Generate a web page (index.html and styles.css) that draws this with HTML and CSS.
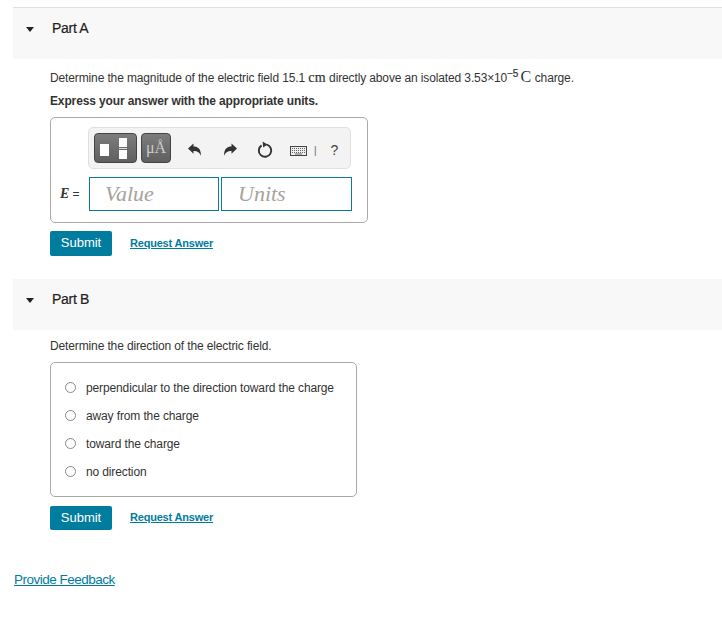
FILE: index.html
```html
<!DOCTYPE html>
<html lang="en">
<head>
  <meta charset="UTF-8">
  <title>Part A and Part B</title>
  <meta name="viewport" content="width=device-width, initial-scale=1.0">
  <link rel="stylesheet" href="styles.css">
</head>
<body>
  <div class="container">
    <section class="part part-a">
      <div class="part-header">
        <span class="caret"></span>
        <h2>Part A</h2>
      </div>
      <div class="part-body">
        <p class="question">Determine the magnitude of the electric field 15.1 <span class="math">cm</span> directly above an isolated 3.53×10<sup>−5</sup> <span class="math math-big">C</span> charge.</p>
        <p class="instruction">Express your answer with the appropriate units.</p>

        <div class="answer-box">
          <div class="toolbar">
            <div class="tool-btn tool-templates">
              <span class="tpl-square"></span>
              <span class="tpl-frac"><i></i><b></b><i></i></span>
            </div>
            <div class="tool-btn tool-units">μÅ</div>
            <svg class="icon icon-undo" width="16" height="16" viewBox="0 0 16 16"><path d="M1 6.5 6.5 1.5V4.6C11 4.6 14 7 14 14 12.7 10.4 10.6 8.9 6.5 8.9V11.8Z" fill="#333"/></svg>
            <svg class="icon icon-redo" width="16" height="16" viewBox="0 0 16 16"><path d="M15 6.5 9.5 1.5V4.6C5 4.6 2 7 2 14 3.3 10.4 5.4 8.9 9.5 8.9V11.8Z" fill="#333"/></svg>
            <svg class="icon icon-reset" width="18" height="18" viewBox="0 0 18 18"><path d="M10.7 3.6A6.2 6.2 0 1 1 5.6 4.4" fill="none" stroke="#333" stroke-width="1.9"/><path d="M6.6 0.6 11.4 3.6 7.2 6.6Z" fill="#333"/></svg>
            <svg class="icon icon-keyboard" width="17" height="10" viewBox="0 0 17 10"><rect x="0.5" y="0.5" width="16" height="9" fill="#eee" stroke="#444"/><path d="M2 2.5H15M2 4.5H15M2 6.5H15" stroke="#666" stroke-dasharray="1 1"/><path d="M5 8H12" stroke="#666"/></svg>
            <span class="tool-sep">|</span>
            <span class="tool-help">?</span>
          </div>
          <div class="input-row">
            <span class="input-label"><span class="var">E</span> =</span>
            <div class="fake-input value">Value</div>
            <div class="fake-input units">Units</div>
          </div>
        </div>

        <div class="actions">
          <button class="submit">Submit</button>
          <a class="request" href="#">Request Answer</a>
        </div>
      </div>
    </section>

    <section class="part part-b">
      <div class="part-header">
        <span class="caret"></span>
        <h2>Part B</h2>
      </div>
      <div class="part-body">
        <p class="question">Determine the direction of the electric field.</p>

        <div class="options-box">
          <label class="option"><span class="radio"></span>perpendicular to the direction toward the charge</label>
          <label class="option"><span class="radio"></span>away from the charge</label>
          <label class="option"><span class="radio"></span>toward the charge</label>
          <label class="option"><span class="radio"></span>no direction</label>
        </div>

        <div class="actions">
          <button class="submit">Submit</button>
          <a class="request" href="#">Request Answer</a>
        </div>
      </div>
    </section>

    <a class="feedback" href="#">Provide Feedback</a>
  </div>
</body>
</html>
```

FILE: styles.css
```css
body {
  font-family: "Liberation Sans", Arial, sans-serif;
  font-size: 12px;
  letter-spacing: -0.13px;
  margin: 0;
  padding: 0;
  background: #fff;
  color: #333;
}
.container {
  padding: 7px 0 0 13px;
}
.part-a {
  border-top: 1px solid #e0e0e0;
}
.part-b {
  margin-top: 23px;
}
.part-header {
  display: flex;
  align-items: flex-start;
  height: 51px;
  background: #f8f8f8;
}
.part-header h2 {
  margin: 12px 0 0 1px;
  font-size: 14px;
  line-height: 16px;
  font-weight: normal;
  letter-spacing: -0.3px;
  color: #222;
  -webkit-text-stroke: 0.2px #222;
}
.caret {
  width: 0;
  height: 0;
  margin: 19px 17px 0 13px;
  border-left: 4.5px solid transparent;
  border-right: 4.5px solid transparent;
  border-top: 5px solid #222;
}
.part-body {
  padding-left: 37px;
}
.question {
  margin: 0;
  padding-top: 11px;
  line-height: 14px;
}
.part-b .question {
  padding-top: 9px;
}
.math {
  font-family: "Liberation Serif", serif;
  font-size: 14px;
  letter-spacing: 0.3px;
  -webkit-text-stroke: 0.2px #333;
}
.math-big {
  font-size: 16px;
  margin-left: -1px;
  -webkit-text-stroke: 0;
}
sup {
  font-size: 10px;
  line-height: 0;
  -webkit-text-stroke: 0.2px #333;
}
.instruction {
  margin: 9px 0 0;
  line-height: 14px;
  font-weight: bold;
}
.answer-box {
  box-sizing: border-box;
  width: 318px;
  height: 106px;
  margin-top: 9px;
  padding: 9px 15px 0 37px;
  border: 1px solid #aaa;
  border-radius: 5px;
}
.toolbar {
  box-sizing: border-box;
  display: flex;
  align-items: center;
  width: 263px;
  height: 42px;
  padding-left: 5px;
  background: #f3f3f3;
  border: 1px solid #e0e0e0;
  border-radius: 5px;
}
.tool-btn {
  box-sizing: border-box;
  height: 30px;
  border-radius: 4px;
  border: 1px solid #444;
  background: linear-gradient(#7d7d7d, #5f5f5f);
}
.tool-templates {
  display: flex;
  align-items: center;
  width: 43px;
  padding-left: 5px;
}
.tpl-square {
  width: 9px;
  height: 12px;
  margin-top: 3px;
  background: #fff;
}
.tpl-frac {
  display: flex;
  flex-direction: column;
  margin-left: 10px;
}
.tpl-frac i {
  display: block;
  width: 8px;
  height: 9px;
  background: #fff;
}
.tpl-frac b {
  display: block;
  width: 8px;
  height: 1px;
  margin: 1px 0;
  background: #ddd;
}
.tool-units {
  width: 30px;
  margin-left: 4px;
  font-family: "Liberation Serif", serif;
  font-size: 16px;
  letter-spacing: 0;
  line-height: 28px;
  text-align: center;
  color: #ccc;
}
.icon {
  flex: none;
  margin-top: 4px;
}
.icon-undo {
  margin-left: 16px;
}
.icon-redo {
  margin-left: 19px;
}
.icon-reset {
  margin-left: 18px;
}
.icon-keyboard {
  margin-left: 16px;
  margin-top: 5px;
}
.tool-sep {
  margin-left: 7px;
  margin-top: 4px;
  font-size: 10px;
  color: #666;
}
.tool-help {
  margin-left: 14px;
  margin-top: 3px;
  font-size: 14px;
  color: #444;
}
.input-row {
  display: flex;
  align-items: center;
  margin-top: 8px;
  margin-left: -28px;
}
.input-label {
  width: 29px;
  white-space: nowrap;
}
.var {
  font-family: "Liberation Serif", serif;
  font-size: 14px;
  font-style: italic;
  font-weight: bold;
}
.fake-input {
  box-sizing: border-box;
  height: 34px;
  padding-left: 15px;
  border: 1px solid #0b7a9b;
  font-family: "Liberation Serif", serif;
  font-size: 22px;
  font-style: italic;
  letter-spacing: 0;
  line-height: 32px;
  color: #a8a29c;
}
.value {
  width: 130px;
}
.units {
  width: 131px;
  margin-left: 2px;
  padding-left: 16px;
}
.actions {
  display: flex;
  align-items: center;
  margin-top: 9px;
}
.part-a .actions {
  margin-top: 8px;
}
.submit {
  width: 62px;
  height: 25px;
  padding: 0 0 3px;
  border: none;
  border-radius: 2px;
  background: #007c9f;
  color: #fff;
  font-family: inherit;
  font-size: 13px;
}
.part-b .submit {
  height: 24px;
  padding-bottom: 1px;
}
.request {
  margin-left: 18px;
  padding-bottom: 2px;
  font-size: 11px;
  font-weight: bold;
  letter-spacing: -0.2px;
  color: #007c9f;
}
.options-box {
  box-sizing: border-box;
  width: 307px;
  height: 135px;
  margin-top: 9px;
  padding-top: 11px;
  border: 1px solid #aaa;
  border-radius: 5px;
}
.option {
  display: flex;
  align-items: center;
  height: 28px;
  padding-left: 14px;
}
.radio {
  box-sizing: border-box;
  width: 11px;
  height: 11px;
  margin-right: 10px;
  margin-top: -1px;
  border: 1px solid #888;
  border-radius: 50%;
  background: #fff;
}
.feedback {
  display: inline-block;
  margin: 42px 0 0 1px;
  font-size: 13.5px;
  letter-spacing: -0.5px;
  line-height: 16px;
  color: #007c9f;
}
```
